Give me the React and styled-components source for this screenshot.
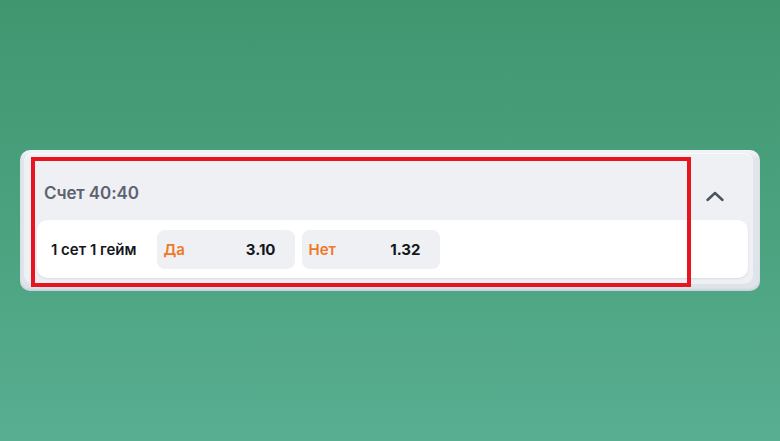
import React from "react";
import styled, { createGlobalStyle } from "styled-components";

const GlobalStyle = createGlobalStyle`
    html, body {
        margin: 0;
        padding: 0;
    }
    body {
        font-family: Inter, "Noto Sans", "Liberation Sans", sans-serif;
    }
`;

const Page = styled.div`
    /* 녹색 그라데이션 배경 */
    width: 780px;
    height: 441px;
    box-sizing: border-box;
    padding: 150px 20px 0 20px;
    background: linear-gradient(180deg, #3f966f 0%, #4ca380 55%, #58ae91 100%);
`;

const Card = styled.div`
    position: relative;
    width: 740px;
    box-sizing: border-box;
    padding: 3px 7px 7px 4px;
    background: linear-gradient(180deg, #f3f5f8 0%, #e2e6ec 6%, #dfe3ea 100%);
    border-radius: 10px;
    box-shadow: inset 0 -2px 2px rgba(170, 180, 195, 0.35);
`;

const Panel = styled.div`
    display: flex;
    flex-direction: column;
    background-color: #eef0f4;
    border-radius: 9px;
    padding: 0 5px 6px 13px;
    box-shadow: inset 0 1px 0 rgba(255, 255, 255, 0.8);
`;

const Header = styled.div`
    display: flex;
    align-items: center;
    justify-content: space-between;
    height: 67px;
    box-sizing: border-box;
    padding: 13px 23px 0 7px;

    svg {
        margin-top: 7px;
    }
`;

const Title = styled.span`
    font-size: 17px;
    font-weight: 600;
    color: #5c636f;
    letter-spacing: -0.1px;
`;

const Row = styled.div`
    display: flex;
    align-items: center;
    height: 58px;
    padding-left: 14px;
    background-color: #fff;
    border-radius: 10px;
    box-shadow: 0 1px 2px rgba(150, 160, 175, 0.25);
`;

const Market = styled.span`
    font-size: 15px;
    font-weight: 600;
    color: #14161a;
    margin-right: 21px;
`;

const Outcomes = styled.div`
    display: flex;
    gap: 7px;
`;

const Outcome = styled.div`
    display: flex;
    align-items: center;
    justify-content: space-between;
    width: 138px;
    height: 39px;
    box-sizing: border-box;
    padding: 0 20px 0 6px;
    background-color: #eef0f4;
    border-radius: 8px;
    font-size: 15px;
    font-weight: 600;
`;

const OutcomeName = styled.span`
    color: #f07826;
`;

const Odds = styled.span`
    color: #14161a;
    font-weight: 700;
`;

const Highlight = styled.div`
    /* 스크린샷 위의 빨간 강조 박스 */
    position: absolute;
    left: 11px;
    top: 7px;
    width: 660px;
    height: 130px;
    box-sizing: border-box;
    border: 4px solid #e8141f;
    pointer-events: none;
`;

const Chevron = () => (
    <svg width="20" height="11" viewBox="0 0 20 11" fill="none">
        <path d="M2.5 9L10 2L17.5 9" stroke="#4b515d" strokeWidth="2.4" strokeLinecap="round" strokeLinejoin="round" />
    </svg>
);

const outcomes = [
    { name: "Да", odds: "3.10" },
    { name: "Нет", odds: "1.32" },
];

export default function App() {
    return (
        <Page>
            <GlobalStyle />
            <Card>
                <Panel>
                    <Header>
                        <Title>Счет 40:40</Title>
                        <Chevron />
                    </Header>
                    <Row>
                        <Market>1 сет 1 гейм</Market>
                        <Outcomes>
                            {outcomes.map((item) => (
                                <Outcome key={item.name}>
                                    <OutcomeName>{item.name}</OutcomeName>
                                    <Odds>{item.odds}</Odds>
                                </Outcome>
                            ))}
                        </Outcomes>
                    </Row>
                </Panel>
                <Highlight />
            </Card>
        </Page>
    );
}
